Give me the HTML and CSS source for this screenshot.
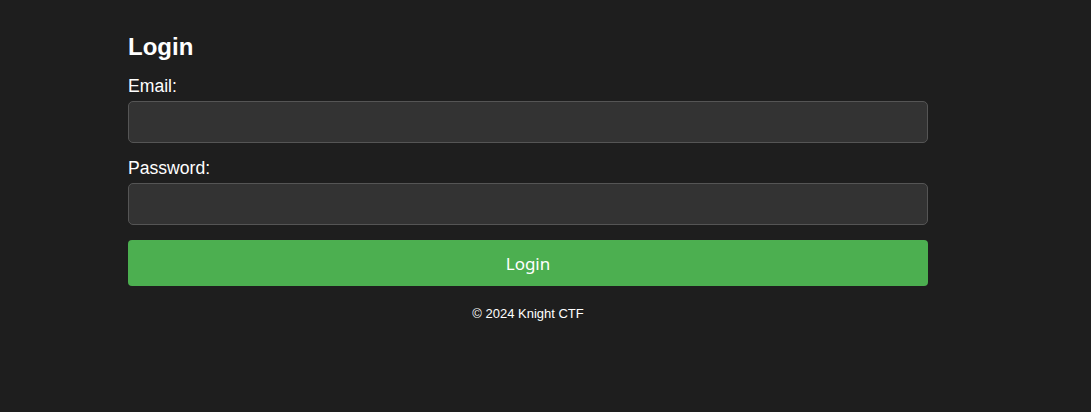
FILE: index.html
```html
<!DOCTYPE html>
<html lang="en">
<head>
<meta charset="utf-8">
<title>Login</title>
<link rel="stylesheet" href="styles.css">
</head>
<body>
<main class="container">
  <h2 class="title">Login</h2>
  <form class="form">
    <label class="label" for="email">Email:</label>
    <input class="input" type="email" id="email">
    <label class="label" for="password">Password:</label>
    <input class="input" type="password" id="password">
    <button class="btn" type="button">Login</button>
  </form>
  <footer class="footer">© 2024 Knight CTF</footer>
</main>
</body>
</html>
```
FILE: styles.css
```css
html, body {
  margin: 0;
  padding: 0;
  background: #1e1e1e;
  color: #ffffff;
  font-family: "Liberation Sans", Arial, sans-serif;
}
.container {
  width: 800px;
  margin-left: 128px;
  padding-top: 32px;
}
.title {
  margin: 0 0 14px;
  font-size: 24px;
  line-height: 30px;
  font-weight: bold;
}
.form {
  display: flex;
  flex-direction: column;
}
.label {
  font-size: 17.6px;
  line-height: 21px;
  margin-bottom: 4px;
}
.input {
  box-sizing: border-box;
  height: 42px;
  margin: 0 0 15px;
  background: #333333;
  border: 1px solid #555555;
  border-radius: 5px;
  color: #fff;
  font-size: 16px;
  padding: 0 10px;
}
.btn {
  height: 46px;
  margin: 0;
  background: #4caf50;
  color: #fff;
  border: none;
  border-radius: 4px;
  font-family: "Noto Sans", "Open Sans", sans-serif;
  font-size: 17px;
}
.footer {
  margin-top: 20px;
  text-align: center;
  font-size: 13px;
  line-height: 16px;
}
```
